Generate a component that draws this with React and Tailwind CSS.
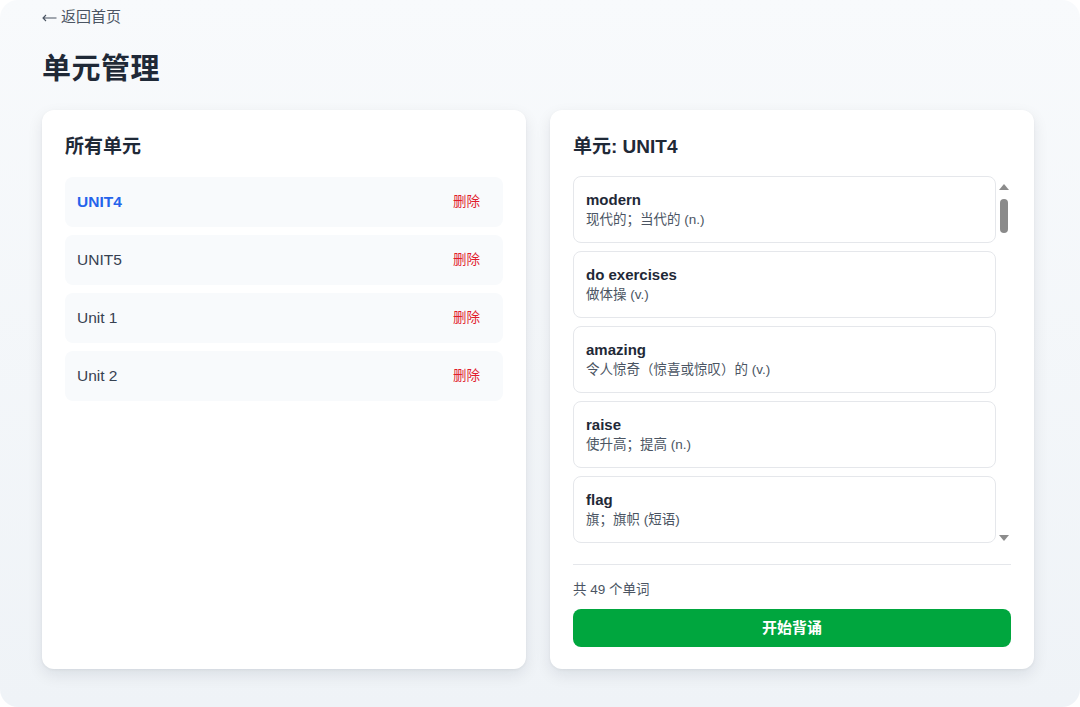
import React from "react";

const words = [
  ["modern", "现代的；当代的 (n.)"],
  ["do exercises", "做体操 (v.)"],
  ["amazing", "令人惊奇（惊喜或惊叹）的 (v.)"],
  ["raise", "使升高；提高 (n.)"],
  ["flag", "旗；旗帜 (短语)"],
  ["race", "赛跑 (n.)"],
  ["table tennis", "乒乓球 (n.)"],
  ["sport", "体育运动 (n.)"],
  ["club", "俱乐部 (n.)"],
  ["team", "队 (n.)"],
];

const units = [
  { name: "UNIT4", active: true },
  { name: "UNIT5" },
  { name: "Unit 1" },
  { name: "Unit 2" },
];

const font = {
  fontFamily:
    '"Liberation Sans", "Noto Sans CJK SC", Arial, sans-serif',
};

export default function App() {
  return (
    <div className="w-[1080px] h-[707px] bg-white" style={font}>
      <div className="w-full h-full rounded-[18px] bg-gradient-to-b from-[#f8fafc] to-[#eff3f7] px-[42px] pt-[6px] overflow-hidden">
        <div className="w-[992px]">
          <div className="h-[22px] flex items-center text-[15px] text-[#4b5563]">
            <svg width="15" height="8" viewBox="0 0 15 8" className="mr-[4px] mt-[2px]">
              <path d="M14.5 4H1M4 1L1 4l3 3" fill="none" stroke="#4b5563" strokeWidth="1.1" />
            </svg>
            返回首页
          </div>
          <h1 className="mt-[23px] h-[38px] flex items-center text-[29px] font-bold text-[#1f2937] tracking-[0.5px]">
            单元管理
          </h1>
          <div className="mt-[21px] flex gap-[24px]">
            <div className="flex-1 bg-white rounded-[12px] shadow-[0_6px_16px_rgba(15,23,42,0.09),0_1px_3px_rgba(15,23,42,0.05)] p-[23px] h-[559px]">
              <h2 className="h-[28px] flex items-center text-[19px] font-bold text-[#1f2937]">
                所有单元
              </h2>
              <div className="mt-[16px] flex flex-col gap-[8px]">
                {units.map((u) => (
                  <div
                    key={u.name}
                    className="h-[50px] rounded-[8px] bg-[#f8fafc] flex items-center justify-between pl-[12px] pr-[23px]"
                  >
                    <span
                      className={
                        u.active
                          ? "text-[15.5px] font-bold text-[#2563eb]"
                          : "text-[15.5px] text-[#374151]"
                      }
                    >
                      {u.name}
                    </span>
                    <span className="text-[13.5px] text-[#e11d2e]">删除</span>
                  </div>
                ))}
              </div>
            </div>
            <div className="flex-1 bg-white rounded-[12px] shadow-[0_6px_16px_rgba(15,23,42,0.09),0_1px_3px_rgba(15,23,42,0.05)] p-[23px] h-[559px] flex flex-col">
              <h2 className="h-[28px] flex items-center text-[19px] font-bold text-[#1f2937]">
                单元: UNIT4
              </h2>
              <div className="mt-[15px] h-[369px] flex">
                <div className="flex-1 overflow-hidden flex flex-col gap-[8px]">
                  {words.map(([w, d]) => (
                    <div
                      key={w}
                      className="h-[67px] shrink-0 rounded-[8px] border border-[#e5e7eb] px-[12px] pt-[13px]"
                    >
                      <div className="text-[15px] leading-[20px] font-bold text-[#1f2937]">
                        {w}
                      </div>
                      <div className="text-[13.5px] leading-[20px] text-[#4b5563]">
                        {d}
                      </div>
                    </div>
                  ))}
                </div>
                <div className="w-[15px] flex flex-col items-center pt-[8px] pb-[4px]">
                  <div className="w-0 h-0 border-l-[5px] border-r-[5px] border-b-[6px] border-l-transparent border-r-transparent border-b-[#8c8c8c]" />
                  <div className="mt-[9px] w-[8px] h-[34px] rounded-full bg-[#8a8a8a]" />
                  <div className="flex-1" />
                  <div className="w-0 h-0 border-l-[5px] border-r-[5px] border-t-[6px] border-l-transparent border-r-transparent border-t-[#8c8c8c]" />
                </div>
              </div>
              <div className="mt-[19px] border-t border-[#e5e7eb] pt-[15px]">
                <div className="h-[20px] flex items-center text-[13.5px] text-[#4b5563]">
                  共 49 个单词
                </div>
                <button className="mt-[9px] w-full h-[38px] rounded-[8px] bg-[#00a63e] text-white text-[15px] font-bold">
                  开始背诵
                </button>
              </div>
            </div>
          </div>
        </div>
      </div>
    </div>
  );
}
